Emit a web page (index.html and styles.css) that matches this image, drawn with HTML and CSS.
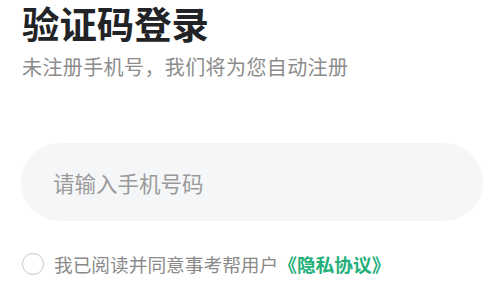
FILE: index.html
```html
<!DOCTYPE html>
<html lang="zh">
<head>
<meta charset="utf-8">
<link rel="stylesheet" href="styles.css">
</head>
<body>
<main class="page">
  <h1 class="title">验证码登录</h1>
  <p class="subtitle">未注册手机号，我们将为您自动注册</p>
  <div class="phone-field">
    <input class="phone-input" type="tel" placeholder="请输入手机号码">
  </div>
  <label class="agree">
    <span class="check"></span>
    <span class="agree-text">我已阅读并同意事考帮用户<a class="link">《隐私协议》</a></span>
  </label>
</main>
</body>
</html>
```

FILE: styles.css
```css
html, body {
  margin: 0;
  padding: 0;
  background: #ffffff;
}
body {
  font-family: "Noto Sans CJK SC", "Noto Sans", sans-serif;
}
.page {
  display: flex;
  flex-direction: column;
  padding: 0 18px 0 21px;
}
.title {
  margin: 0 0 0 1px;
  font-size: 37.4px;
  line-height: 46px;
  font-weight: 700;
  color: #222326;
}
.subtitle {
  margin: 7px 0 0 1px;
  font-size: 20px;
  letter-spacing: 0.4px;
  line-height: 28px;
  color: #8c8c8c;
}
.phone-field {
  margin-top: 62px;
  height: 78px;
  border-radius: 39px;
  background: #f5f6f8;
  display: flex;
  align-items: center;
  padding: 0 32px;
}
.phone-input {
  border: none;
  outline: none;
  background: transparent;
  font-family: inherit;
  font-size: 21.5px;
  color: #333;
  width: 100%;
  padding: 0;
}
.phone-input::placeholder {
  color: #9a9a9a;
}
.agree {
  margin-top: 31px;
  display: flex;
  align-items: center;
  gap: 10px;
  padding-left: 1px;
}
.check {
  width: 20px;
  height: 20px;
  border: 1px solid #c8c8c8;
  border-radius: 50%;
  flex: none;
}
.agree-text {
  font-size: 18.7px;
  line-height: 24px;
  color: #8a8a8a;
}
.link {
  color: #22b07a;
  font-weight: 700;
}
```
